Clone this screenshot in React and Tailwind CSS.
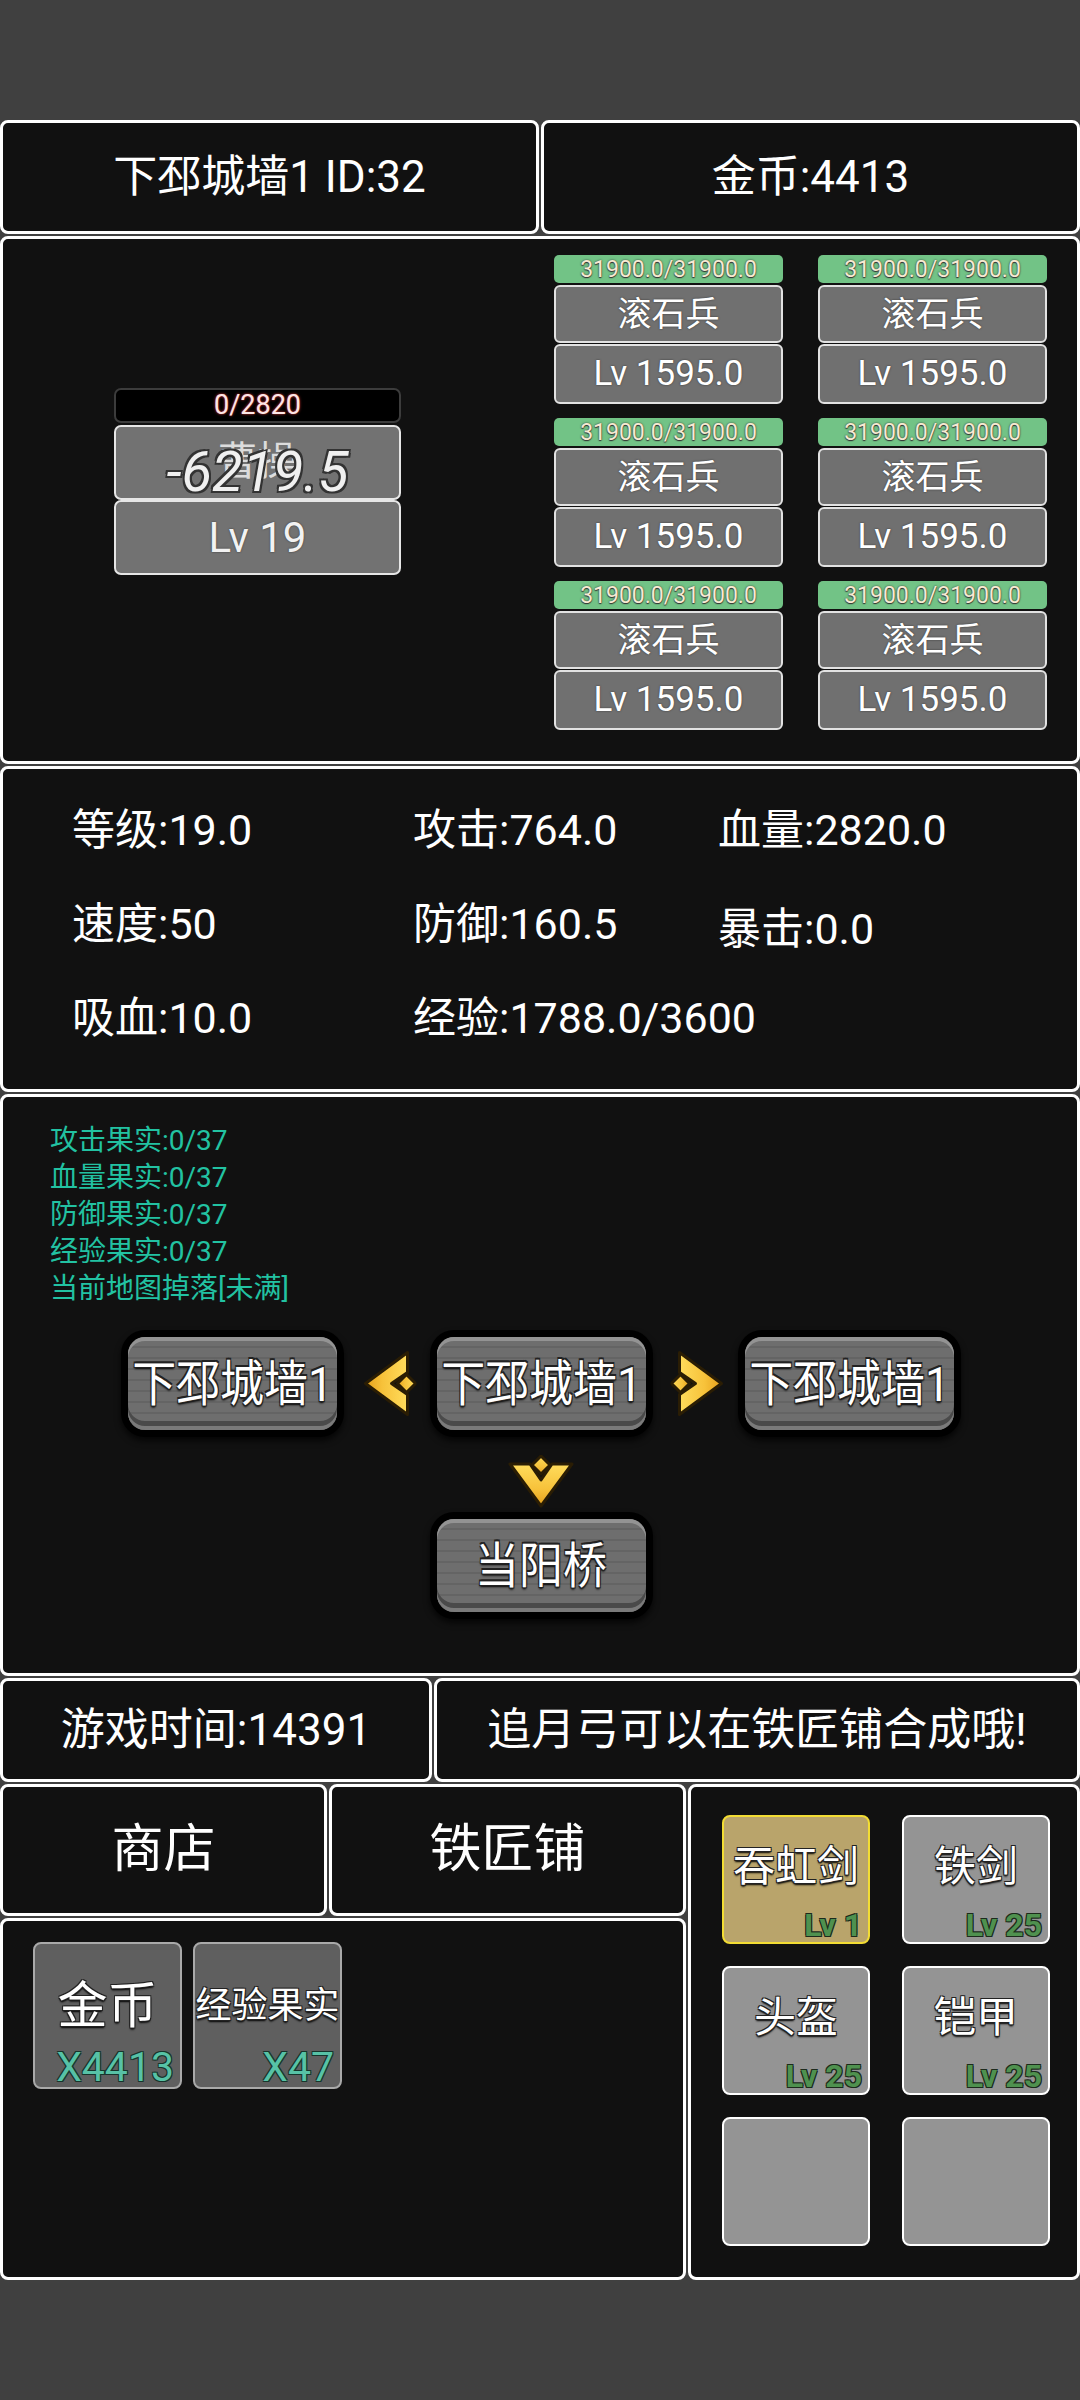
import React from "react";

const outline =
  "[text-shadow:-1px_-1px_0_#222,1px_-1px_0_#222,-1px_1px_0_#222,1px_1px_0_#222,0_2px_2px_#000]";

function Panel({ className = "", children }) {
  return (
    <div className={`rounded-[8px] border-[3px] border-white bg-[#111111] ${className}`}>
      {children}
    </div>
  );
}

function AllyCard() {
  return (
    <div className="flex w-[229px] flex-col">
      <div className="flex h-[28px] items-center justify-center rounded-[5px] bg-[#72c386] text-[23px] leading-none text-[#f6ead2] [text-shadow:0_0_2px_#333,0_1px_1px_#333]">
        31900.0/31900.0
      </div>
      <div className="mt-[2px] flex h-[58px] items-center justify-center rounded-[6px] border-2 border-[#e2e2e2] bg-[#707070] text-[34px] text-white [text-shadow:0_0_2px_#333]">
        滚石兵
      </div>
      <div className="mt-[1px] flex h-[60px] items-center justify-center rounded-[6px] border-2 border-[#e2e2e2] bg-[#707070] text-[35px] text-white [text-shadow:0_0_2px_#333]">
        Lv 1595.0
      </div>
    </div>
  );
}

function Arrow({ className = "" }) {
  return (
    <svg width="66" height="53" viewBox="0 0 66 53" className={`shrink-0 ${className}`}>
      <defs>
        <linearGradient id="gold" x1="0" y1="0" x2="0" y2="1">
          <stop offset="0" stopColor="#ffdc5c" />
          <stop offset="0.6" stopColor="#f7c23a" />
          <stop offset="1" stopColor="#e5a01c" />
        </linearGradient>
      </defs>
      <polygon
        points="2,9 22,9 33,25 44,9 64,9 33,51"
        fill="url(#gold)"
        stroke="#2a1d04"
        strokeWidth="3"
        strokeLinejoin="round"
      />
      <polygon
        points="33,1 42,10 33,19 24,10"
        fill="url(#gold)"
        stroke="#2a1d04"
        strokeWidth="3"
        strokeLinejoin="round"
      />
    </svg>
  );
}

function SideArrow({ dir }) {
  return (
    <div className="flex h-[66px] w-[53px] shrink-0 items-center justify-center">
      <Arrow className={dir === "left" ? "rotate-90" : "-rotate-90"} />
    </div>
  );
}

function MapBtn({ label }) {
  return (
    <div className="h-[107px] w-[223px] shrink-0 rounded-[24px] bg-black p-[7px] shadow-[0_4px_6px_rgba(0,0,0,0.7)]">
      <div className="flex h-full w-full items-center justify-center rounded-[17px] bg-[repeating-linear-gradient(180deg,#6e6e6e_0px,#6e6e6e_9px,#646464_9px,#646464_11px)] shadow-[inset_0_4px_0_#939393,inset_0_-4px_0_#7a7a7a,inset_0_-9px_0_#4a4a4a]">
        <span className={`scale-y-110 whitespace-nowrap text-[44px] leading-none text-white ${outline}`}>
          {label}
        </span>
      </div>
    </div>
  );
}

function BagItem({ name, count, small }) {
  return (
    <div className="flex h-[147px] w-[149px] flex-col rounded-[8px] border-2 border-[#a9a9a9] bg-[#5f5f5f]">
      <div className="mt-[31px] flex h-[64px] items-center justify-center">
        <span
          className={`${small ? "text-[36px]" : "text-[50px]"} leading-none whitespace-nowrap text-white ${outline}`}
        >
          {name}
        </span>
      </div>
      <div className="mt-[11px] pr-[6px] text-right text-[41px] leading-[40px] text-[#57c2a6] [text-shadow:-1px_-1px_0_#17352c,1px_-1px_0_#17352c,-1px_1px_0_#17352c,1px_1px_0_#17352c]">
        {count}
      </div>
    </div>
  );
}

function EquipItem({ name, lv, active }) {
  return (
    <div
      className={`flex h-[129px] w-[148px] flex-col rounded-[8px] border-2 ${
        active ? "border-[#f2dc34] bg-[#b9a46b]" : "border-white bg-[#949494]"
      }`}
    >
      {name && (
        <>
          <div className="mt-[25px] flex h-[50px] items-center justify-center">
            <span className={`text-[42px] leading-none text-white ${outline}`}>{name}</span>
          </div>
          <div className="mt-[17px] pr-[6px] text-right text-[32px] font-bold leading-[32px] text-[#4f914f] [text-shadow:-1px_-1px_0_#1c2a1c,1px_-1px_0_#1c2a1c,-1px_1px_0_#1c2a1c,1px_1px_0_#1c2a1c]">
            {lv}
          </div>
        </>
      )}
    </div>
  );
}

export default function App() {
  const stats = [
    ["等级:19.0", "攻击:764.0", "血量:2820.0"],
    ["速度:50", "防御:160.5", "暴击:0.0"],
    ["吸血:10.0", "经验:1788.0/3600", ""],
  ];
  const fruits = [
    "攻击果实:0/37",
    "血量果实:0/37",
    "防御果实:0/37",
    "经验果实:0/37",
    "当前地图掉落[未满]",
  ];

  return (
    <div className="flex h-[2400px] w-[1080px] flex-col gap-[2px] bg-[#404040] font-['Roboto','Noto_Sans_CJK_SC',sans-serif] text-white">
      <div className="h-[118px] shrink-0" />

      {/* header */}
      <div className="flex h-[114px] shrink-0 gap-[2px]">
        <Panel className="flex flex-1 items-center justify-center text-[44px]">下邳城墙1 ID:32</Panel>
        <Panel className="flex flex-1 items-center justify-center text-[44px]">金币:4413</Panel>
      </div>

      {/* battle */}
      <Panel className="flex h-[528px] shrink-0">
        <div className="flex w-[537px] items-center pb-[38px] pl-[111px]">
          <div className="flex w-[287px] flex-col">
            <div className="flex h-[35px] items-center justify-center rounded-[7px] border-2 border-[#3c3c3c] bg-black text-[27px] leading-none text-[#fbe6e6] [text-shadow:0_0_3px_#b33,0_0_1px_#b33]">
              0/2820
            </div>
            <div className="relative mt-[2px] flex h-[75px] items-center justify-center rounded-[7px] border-2 border-[#e6e6e6] bg-[#727272]">
              <span className="text-[40px] leading-none text-[#dcdcdc]">曹操</span>
              <span className="absolute left-0 right-0 top-[17px] z-10 text-center text-[56px] italic leading-none text-[#f0f0f0] [text-shadow:-2px_-2px_0_#333,2px_-2px_0_#333,-2px_2px_0_#333,2px_2px_0_#333]">
                -6219.5
              </span>
            </div>
            <div className="flex h-[75px] items-center justify-center rounded-[7px] border-2 border-[#e6e6e6] bg-[#727272] text-[42px] text-[#f2f2f2] [text-shadow:0_0_2px_#333]">
              Lv 19
            </div>
          </div>
        </div>
        <div className="grid grid-cols-[229px_229px] content-start gap-x-[35px] gap-y-[14px] pt-[16px] pl-[14px]">
          {Array.from({ length: 6 }).map((_, i) => (
            <AllyCard key={i} />
          ))}
        </div>
      </Panel>

      {/* stats */}
      <Panel className="h-[326px] shrink-0 pl-[69px] pt-[14px]">
        {stats.map((row, r) => (
          <div key={r} className="grid h-[94px] grid-cols-[341px_305px_1fr] items-center text-[43px]">
            {row.map((s, c) => (
              <div key={c} className={`whitespace-nowrap ${r === 1 && c === 2 ? "pt-[10px]" : ""}`}>
                {s}
              </div>
            ))}
          </div>
        ))}
      </Panel>

      {/* fruits + map */}
      <Panel className="flex h-[582px] shrink-0 flex-col">
        <div className="pl-[47px] pt-[25px] text-[28px] leading-[37px] text-[#22c2a2]">
          {fruits.map((f) => (
            <div key={f}>{f}</div>
          ))}
        </div>
        <div className="mt-[23px] flex items-center justify-center pl-[2px]">
          <MapBtn label="下邳城墙1" />
          <div className="ml-[19px]">
            <SideArrow dir="left" />
          </div>
          <div className="ml-[14px]">
            <MapBtn label="下邳城墙1" />
          </div>
          <div className="ml-[17px]">
            <SideArrow dir="right" />
          </div>
          <div className="ml-[15px]">
            <MapBtn label="下邳城墙1" />
          </div>
        </div>
        <div className="mt-[18px] flex justify-center pl-[2px]">
          <Arrow />
        </div>
        <div className="mt-[4px] flex justify-center pl-[2px]">
          <MapBtn label="当阳桥" />
        </div>
      </Panel>

      {/* time row */}
      <div className="flex h-[104px] shrink-0 gap-[2px]">
        <Panel className="flex w-[432px] items-center justify-center text-[44px]">游戏时间:14391</Panel>
        <Panel className="flex flex-1 items-center justify-center text-[44px]">追月弓可以在铁匠铺合成哦!</Panel>
      </div>

      {/* bottom */}
      <div className="flex h-[496px] shrink-0 gap-[2px]">
        <div className="flex w-[686px] flex-col gap-[2px]">
          <div className="flex h-[132px] gap-[2px]">
            <Panel className="flex w-[327px] items-center justify-center text-[52px]">商店</Panel>
            <Panel className="flex flex-1 items-center justify-center text-[52px]">铁匠铺</Panel>
          </div>
          <Panel className="flex flex-1 items-start gap-[11px] pl-[30px] pt-[21px]">
            <BagItem name="金币" count="X4413" />
            <BagItem name="经验果实" count="X47" small />
          </Panel>
        </div>
        <Panel className="grid flex-1 grid-cols-[148px_148px] content-start gap-x-[32px] gap-y-[22px] pl-[31px] pt-[28px]">
          <EquipItem name="吞虹剑" lv="Lv 1" active />
          <EquipItem name="铁剑" lv="Lv 25" />
          <EquipItem name="头盔" lv="Lv 25" />
          <EquipItem name="铠甲" lv="Lv 25" />
          <EquipItem />
          <EquipItem />
        </Panel>
      </div>

      <div className="flex-1" />
    </div>
  );
}
